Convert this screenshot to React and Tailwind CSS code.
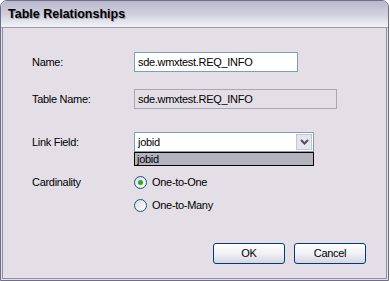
import React from 'react';

const font = { fontFamily: '"Liberation Sans", Arial, sans-serif' };

function Radio({ checked, label }) {
  return (
    <div className="flex items-center gap-[5px] h-[13px]">
      <span className="w-[13px] h-[13px] rounded-full border border-[#1c5180] bg-gradient-to-br from-[#dcdcd6] to-white flex items-center justify-center">
        {checked && <span className="w-[5px] h-[5px] rounded-full bg-[#2fa832]" />}
      </span>
      <span>{label}</span>
    </div>
  );
}

function Button({ children }) {
  return (
    <button className="w-[72px] h-[21px] rounded-[3px] border border-[#003c74] bg-gradient-to-b from-white via-[#f0f0f6] to-[#d6d6e4] text-[11px] text-black">
      {children}
    </button>
  );
}

export default function App() {
  return (
    <div style={font} className="w-[390px] h-[281px] text-[11px] tracking-[-0.3px] text-black bg-white">
      <div className="w-[389px] h-[281px] rounded-t-[7px] border border-[#6e6e8c] bg-[#e4dfe7] flex flex-col overflow-hidden">
        {/* title bar */}
        <div className="h-[27px] flex items-center px-[7px] bg-gradient-to-b from-[#b9b8cc] via-[#cfcfdc] to-[#f3f3f7] border-b border-[#9a9aae]">
          <span className="text-[12.5px] tracking-normal font-bold text-black [text-shadow:1px_1px_0_#a0a0b0]">Table Relationships</span>
        </div>
        {/* body */}
        <div className="flex-1 mx-[1px] mb-[1px] border-x border-b border-[#8e8ea8] relative">
          <div className="pl-[29px] pt-[24px]">
            <div className="flex items-center h-[20px]">
              <span className="w-[102px]">Name:</span>
              <div className="w-[164px] h-[20px] bg-white border border-[#7f9db9] flex items-center px-[3px]">sde.wmxtest.REQ_INFO</div>
            </div>
            <div className="flex items-center h-[20px] mt-[17px]">
              <span className="w-[102px]">Table Name:</span>
              <div className="w-[203px] h-[20px] border border-[#a8a8b4] flex items-center px-[3px]">sde.wmxtest.REQ_INFO</div>
            </div>
            <div className="flex items-center h-[20px] mt-[23px]">
              <span className="w-[102px]">Link Field:</span>
              <div className="relative w-[180px] h-[20px] bg-white border border-[#7f9db9] flex items-center">
                <span className="flex-1 px-[3px]">jobid</span>
                <span className="w-[16px] h-[16px] mr-[1px] bg-[#e6e4ec] border border-[#c4c4d2] flex items-center justify-center">
                  <svg width="9" height="6" viewBox="0 0 9 6">
                    <path d="M1 1 L4.5 4.5 L8 1" stroke="#4d4d5c" strokeWidth="2" fill="none" />
                  </svg>
                </span>
                <div className="absolute left-[-1px] top-[19px] w-[180px] h-[14px] border border-black bg-[#b3b3bd] flex items-center px-[2px]">jobid</div>
              </div>
            </div>
            <div className="flex mt-[22px]">
              <span className="w-[102px]">Cardinality</span>
              <div className="flex flex-col gap-[10px] pt-[2px]">
                <Radio checked label="One-to-One" />
                <Radio label="One-to-Many" />
              </div>
            </div>
            <div className="flex justify-end gap-[9px] mt-[31px] pr-[20px]">
              <Button>OK</Button>
              <Button>Cancel</Button>
            </div>
          </div>
        </div>
      </div>
    </div>
  );
}
